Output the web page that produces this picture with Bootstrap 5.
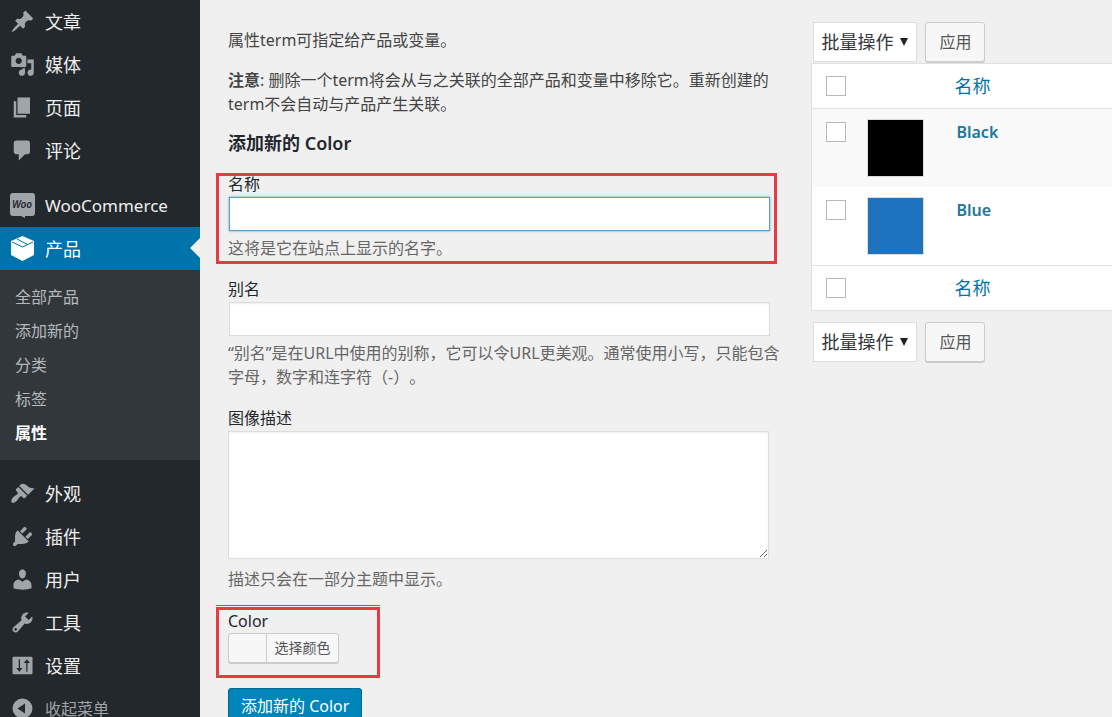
<!DOCTYPE html>
<html lang="zh-CN">
<head>
<meta charset="utf-8">
<meta name="viewport" content="width=device-width, initial-scale=1">
<title>产品 Color</title>
<link rel="stylesheet" href="https://cdn.jsdelivr.net/npm/bootstrap@5.3.0/dist/css/bootstrap.min.css">
<style>
html { scrollbar-width: none; }
body { font-family: "Noto Sans", "Noto Sans CJK SC", sans-serif; font-size: 16px; line-height: 24px; color: #444; background: #f0f0f0; text-spacing-trim: space-all; }
/* admin menu */
.admin-menu { flex: 0 0 200px; background: #23282d; }
.admin-menu a { text-decoration: none; }
.menu-link { height: 43px; padding-left: 10px; gap: 10px; font-size: 18px; color: #eee; position: relative; }
.menu-link svg { width: 25px; height: 25px; fill: #a0a5aa; flex: none; }
.menu-link.latin-link { font-size: 17px; }
.menu-gap { height: 12px; }
.menu-link.current { background: #0073aa; color: #fff; }
.menu-link.current svg { fill: #fff; }
.menu-link.current::after { content: ""; position: absolute; right: 0; top: 11px; border: 10px solid transparent; border-left: 0; border-right-color: #f0f0f0; }
.menu-link.collapse-link { font-size: 16px; color: #a0a5aa; }
.submenu { background: #32373c; padding: 10px 0 10px 15px; }
.submenu a { display: block; line-height: 34px; color: #b4b9be; }
.submenu a.current { color: #fff; font-weight: 700; }
/* term form */
.main-area { padding-left: 28px; min-width: 0; }
.form-col { flex: 0 0 66%; padding: 28px 26px 0 0; }
.form-col p { margin-bottom: 16px; }
.form-title { font-size: 18px; line-height: 24px; font-weight: 600; color: #23282d; margin: -1px 0 17px; }
.term-field { margin-bottom: 17px; position: relative; }
.term-field label { display: block; color: #23282d; }
.term-field .term-help { color: #666; margin: 5px 0 0; }
.term-input { display: block; width: 97%; margin: 1px; height: 34px; border: 1px solid #ddd; border-radius: 0; background: #fff; box-shadow: inset 0 1px 2px rgba(0,0,0,.07); padding: 3px 5px; outline: 0; }
.term-input.active-input { border-color: #5b9dd9; box-shadow: 0 0 2px rgba(30,140,190,.8); }
textarea.term-input { height: 128px; margin: 1px 0 8px; resize: both; }
.marked::before { content: ""; position: absolute; inset: 1px 8px -4px -12px; border: 3px solid #e53b41; pointer-events: none; }
.color-field { padding-top: 1px; margin-bottom: 25px; width: 140px; }
.color-field.marked::before { inset: -1px -12px -15px -12px; box-shadow: 0 -1px 0 #f0f0f0, 0 -2px 0 #e53b41; }
.wp-btn { background: #f7f7f7; color: #555; border: 1px solid #ccc; border-radius: 3px; box-shadow: 0 1px 0 #ccc; }
.color-btn { height: 30px; width: 111px; padding: 0; font-size: 14px; overflow: hidden; }
.color-btn .swatch-side { width: 38px; border-right: 1px solid #ccc; }
.submit-btn { height: 36px; padding: 0 12px; background: #0085ba; color: #fff; border: 1px solid #006799; border-radius: 3px; box-shadow: 0 1px 0 #006799; }
/* term list */
.list-col { padding-top: 22px; }
.bulk-bar { padding-left: 2px; gap: 8px; }
.bulk-select { width: 104px; height: 40px; padding: 0 7px; font-size: 18px; color: #32373c; border: 1px solid #ddd; border-radius: 0; appearance: none; background: #fff url("data:image/svg+xml,%3Csvg xmlns='http://www.w3.org/2000/svg' viewBox='0 0 8 8'%3E%3Cpath d='M0 0h8L4 8z' fill='%23222'/%3E%3C/svg%3E") no-repeat right 8px center / 8px 8px; }
.apply-btn { width: 60px; height: 40px; padding: 0; }
.term-table { width: 100%; margin-top: 1px; margin-bottom: 11px; background: #fff; border: 1px solid #e1e1e1; border-right: 0; table-layout: fixed; border-collapse: separate; border-spacing: 0; }
.term-table th, .term-table td { vertical-align: top; padding: 0; }
.term-table thead th { border-bottom: 1px solid #e1e1e1; }
.term-table tfoot th { border-top: 1px solid #e1e1e1; }
.term-table thead th, .term-table tfoot th { height: 45px; vertical-align: middle; font-weight: 400; font-size: 18px; }
.term-table tbody td { height: 78px; }
.term-table a { color: #0073aa; text-decoration: none; }
.term-table .check-cell { width: 55px; padding-left: 14px; }
.term-table .thumb-cell { width: 87px; }
.term-table tbody .check-cell { padding-top: 13px; }
.term-table tbody tr:first-child td { background: #f9f9f9; }
.term-table tbody .name-cell { padding: 11px 0 0 2px; font-weight: 600; font-size: 16px; }
.term-table tbody .name-cell a { color: #21759b; }
.term-check { display: block; appearance: none; width: 20px; height: 20px; margin: 0; border: 1px solid #b4b9be; background: #fff; }
.color-thumb { width: 57px; height: 58px; margin-top: 10px; border: 1px solid #ddd; }
</style>
</head>
<body>
<div class="d-flex min-vh-100">
  <nav class="admin-menu" aria-label="主菜单">
    <a href="#" class="menu-link d-flex align-items-center"><svg viewBox="0 0 20 20"><path d="M10.44 3.02l1.82-1.82 6.36 6.35-1.83 1.82c-1.05-.68-2.48-.57-3.41.36l-.75.75c-.92.93-1.04 2.35-.35 3.41l-1.83 1.82-2.41-2.41-2.8 2.79c-.42.42-3.38 2.71-3.8 2.29s1.86-3.39 2.28-3.81l2.79-2.79L4.1 9.36l1.83-1.82c1.05.69 2.48.57 3.4-.36l.75-.75c.93-.92 1.05-2.35.36-3.41z"/></svg>文章</a>
    <a href="#" class="menu-link d-flex align-items-center"><svg viewBox="0 0 20 20"><path d="M13 11V4c0-.55-.45-1-1-1h-1.67L9 1H5L3.67 3H2c-.55 0-1 .45-1 1v7c0 .55.45 1 1 1h10c.55 0 1-.45 1-1zM7 4.5c1.38 0 2.5 1.12 2.5 2.5S8.38 9.5 7 9.5 4.5 8.38 4.5 7 5.62 4.5 7 4.5zM14 6h5v10.5c0 1.38-1.12 2.5-2.5 2.5S14 17.88 14 16.5s1.12-2.5 2.5-2.5c.17 0 .34.02.5.05V9h-3V6zm-4 8.05V13h2v3.5c0 1.38-1.12 2.5-2.5 2.5S7 17.88 7 16.5 8.12 14 9.5 14c.17 0 .34.02.5.05z"/></svg>媒体</a>
    <a href="#" class="menu-link d-flex align-items-center"><svg viewBox="0 0 20 20"><path d="M6 15V2h10v13H6zm-1 1h8v2H3V5h2v11z"/></svg>页面</a>
    <a href="#" class="menu-link d-flex align-items-center"><svg viewBox="0 0 20 20"><path d="M5 2h9c1.1 0 2 .9 2 2v7c0 1.1-.9 2-2 2h-2l-5 5v-5H5c-1.1 0-2-.9-2-2V4c0-1.1.9-2 2-2z"/></svg>评论</a>
    <div class="menu-gap"></div>
    <a href="#" class="menu-link latin-link d-flex align-items-center"><svg viewBox="0 0 25 25"><path d="M3 0h19a3 3 0 0 1 3 3v17a3 3 0 0 1-3 3h-7v2l-4-2H3a3 3 0 0 1-3-3V3a3 3 0 0 1 3-3z"/><text x="12" y="15" text-anchor="middle" font-size="10" font-weight="600" font-style="italic" fill="#23282d">Woo</text></svg>WooCommerce</a>
    <a href="#" class="menu-link current d-flex align-items-center" aria-current="true"><svg viewBox="0 0 25 25"><path d="M12.500 0L24 5v14l-11.500 6L1 19V5z"/><path d="M2 6l10.500 5L23 6M7 3l10.500 5.500" fill="none" stroke="#0073aa" stroke-width="1"/></svg>产品</a>
    <div class="submenu">
      <a href="#">全部产品</a>
      <a href="#">添加新的</a>
      <a href="#">分类</a>
      <a href="#">标签</a>
      <a href="#" class="current">属性</a>
    </div>
    <div class="menu-gap"></div>
    <a href="#" class="menu-link d-flex align-items-center"><svg viewBox="0 0 20 20"><path d="M14.48 11.06L7.41 3.99l1.5-1.5c.5-.56 2.3-.47 3.51.32 1.21.8 1.43 1.28 2.91 2.1 1.18.64 2.45 1.26 4.45.85zm-.71.71L6.7 4.7 4.93 6.47c-.39.39-.39 1.02 0 1.41l1.06 1.06c.39.39.39 1.03 0 1.42-.6.6-1.43 1.11-2.21 1.69-.35.26-.7.53-1.01.84C1.43 14.23.4 16.08 1.4 17.07c.99 1 2.84-.03 4.18-1.36.31-.31.58-.66.85-1.02.57-.78 1.08-1.61 1.69-2.21.39-.39 1.02-.39 1.41 0l1.06 1.06c.39.39 1.02.39 1.41 0z"/></svg>外观</a>
    <a href="#" class="menu-link d-flex align-items-center"><svg viewBox="0 0 20 20"><path d="M13.110 4.360L9.870 7.600 8 5.730l3.240-3.240c.35-.34 1.050-.2 1.560.32.52.51.66 1.210.31 1.550zm-8 1.770l.91-1.120 9.010 9.010-1.190.84c-.71.71-2.630 1.160-3.820 1.160H6.140L4.900 17.260c-.59.59-1.540.59-2.120 0-.59-.58-.59-1.530 0-2.120l1.240-1.240v-3.880c0-1.130.4-3.190 1.090-3.890zm7.260 3.970l3.240-3.240c.34-.35 1.040-.21 1.550.31.52.51.66 1.210.31 1.550l-3.240 3.250z"/></svg>插件</a>
    <a href="#" class="menu-link d-flex align-items-center"><svg viewBox="0 0 20 20"><path d="M10 9.250c-2.270 0-2.730-3.440-2.730-3.440C7 4.020 7.820 2 9.970 2c2.160 0 2.980 2.020 2.710 3.810 0 0-.41 3.440-2.680 3.440zm0 2.570L12.720 10c2.390 0 4.520 2.330 4.520 4.530v2.490s-3.650 1.130-7.240 1.130c-3.650 0-7.240-1.130-7.240-1.130v-2.490c0-2.250 1.940-4.480 4.470-4.480z"/></svg>用户</a>
    <a href="#" class="menu-link d-flex align-items-center"><svg viewBox="0 0 20 20"><path d="M16.680 9.770c-1.340 1.340-3.300 1.670-4.950.99l-5.410 6.520c-.99.99-2.590.99-3.580 0s-.99-2.590 0-3.570l6.520-5.420c-.68-1.650-.35-3.610.99-4.950 1.280-1.280 3.120-1.620 4.720-1.060l-2.890 2.890 2.820 2.820 2.860-2.870c.53 1.580.18 3.390-1.080 4.650zM3.810 16.210c.4.39 1.040.39 1.430 0 .4-.4.4-1.040 0-1.430-.39-.4-1.030-.4-1.430 0-.39.39-.39 1.030 0 1.430z"/></svg>工具</a>
    <a href="#" class="menu-link d-flex align-items-center"><svg viewBox="0 0 20 20"><path fill-rule="evenodd" d="M18 16V4c0-.55-.45-1-1-1H3c-.55 0-1 .45-1 1v12c0 .55.45 1 1 1h14c.55 0 1-.45 1-1zM7 5h1v7h2l-2.500 3L5 12h2zM13 15h1V8h2l-2.500-3L11 8h2z"/></svg>设置</a>
    <a href="#" class="menu-link collapse-link d-flex align-items-center"><svg viewBox="0 0 20 20"><path fill-rule="evenodd" d="M10 2a8 8 0 1 1 0 16 8 8 0 0 1 0-16zM12 6L6 10l6 4z"/></svg>收起菜单</a>
  </nav>

  <main class="main-area flex-grow-1 d-flex">
    <section class="form-col">
      <p>属性term可指定给产品或变量。</p>
      <p><strong>注意</strong>: 删除一个term将会从与之关联的全部产品和变量中移除它。重新创建的term不会自动与产品产生关联。</p>
      <form>
        <h2 class="form-title">添加新的 Color</h2>
        <div class="term-field marked">
          <label for="term-name">名称</label>
          <input type="text" id="term-name" class="term-input active-input">
          <p class="term-help">这将是它在站点上显示的名字。</p>
        </div>
        <div class="term-field">
          <label for="term-slug">别名</label>
          <input type="text" id="term-slug" class="term-input">
          <p class="term-help">“别名”是在URL中使用的别称，它可以令URL更美观。通常使用小写，只能包含字母，数字和连字符（-）。</p>
        </div>
        <div class="term-field">
          <label for="term-desc">图像描述</label>
          <textarea id="term-desc" class="term-input"></textarea>
          <p class="term-help">描述只会在一部分主题中显示。</p>
        </div>
        <div class="term-field color-field marked">
          <label for="term-color">Color</label>
          <button type="button" id="term-color" class="wp-btn color-btn d-flex align-items-stretch"><span class="swatch-side"></span><span class="flex-grow-1 align-self-center">选择颜色</span></button>
        </div>
        <button type="submit" class="submit-btn">添加新的 Color</button>
      </form>
    </section>

    <section class="list-col flex-grow-1">
      <div class="bulk-bar d-flex">
        <select class="bulk-select" aria-label="批量操作"><option>批量操作</option></select>
        <button type="button" class="wp-btn apply-btn">应用</button>
      </div>
      <table class="term-table">
        <thead><tr>
          <th class="check-cell"><input type="checkbox" class="term-check" aria-label="全选"></th>
          <th class="thumb-cell"></th>
          <th><a href="#">名称</a></th>
        </tr></thead>
        <tbody>
          <tr>
            <td class="check-cell"><input type="checkbox" class="term-check" aria-label="Black"></td>
            <td class="thumb-cell"><div class="color-thumb" style="background:#000"></div></td>
            <td class="name-cell"><a href="#">Black</a></td>
          </tr>
          <tr>
            <td class="check-cell"><input type="checkbox" class="term-check" aria-label="Blue"></td>
            <td class="thumb-cell"><div class="color-thumb" style="background:#1e73be"></div></td>
            <td class="name-cell"><a href="#">Blue</a></td>
          </tr>
        </tbody>
        <tfoot><tr>
          <th class="check-cell"><input type="checkbox" class="term-check" aria-label="全选"></th>
          <th class="thumb-cell"></th>
          <th><a href="#">名称</a></th>
        </tr></tfoot>
      </table>
      <div class="bulk-bar d-flex">
        <select class="bulk-select" aria-label="批量操作"><option>批量操作</option></select>
        <button type="button" class="wp-btn apply-btn">应用</button>
      </div>
    </section>
  </main>
</div>
<script src="https://cdn.jsdelivr.net/npm/bootstrap@5.3.0/dist/js/bootstrap.bundle.min.js"></script>
</body>
</html>
